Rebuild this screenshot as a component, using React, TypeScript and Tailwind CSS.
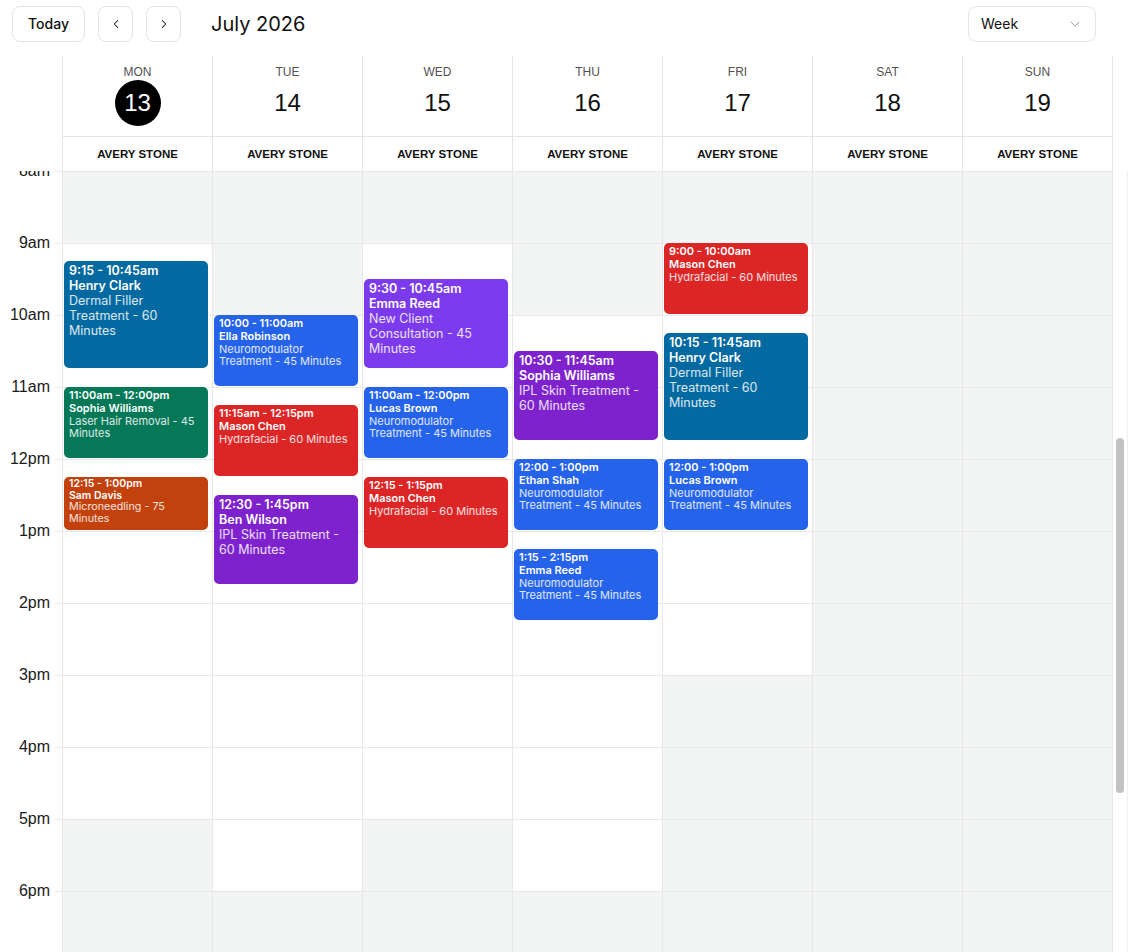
import { useLayoutEffect, useRef } from "react";
import { ChevronDown, ChevronLeft, ChevronRight } from "lucide-react";

type Size = "lg" | "md" | "sm";

type Appt = {
  start: number;
  end: number;
  time: string;
  client: string;
  service: string;
  color: string;
  size: Size;
};

type Day = {
  name: string;
  date: number;
  today?: boolean;
  open?: [number, number];
  appts: Appt[];
};

const HOUR_PX = 72;
const FIRST_VISIBLE_HOUR = 8;

const SKY = "bg-[#0369a1]";
const EMERALD = "bg-[#047857]";
const ORANGE = "bg-[#c2410c]";
const BLUE = "bg-[#2563eb]";
const RED = "bg-[#dc2626]";
const PURPLE = "bg-[#7e22ce]";
const VIOLET = "bg-[#7c3aed]";

const days: Day[] = [
  {
    name: "MON",
    date: 13,
    today: true,
    open: [9, 17],
    appts: [
      { start: 9.25, end: 10.75, time: "9:15 - 10:45am", client: "Henry Clark", service: "Dermal Filler Treatment - 60 Minutes", color: SKY, size: "lg" },
      { start: 11, end: 12, time: "11:00am - 12:00pm", client: "Sophia Williams", service: "Laser Hair Removal - 45 Minutes", color: EMERALD, size: "md" },
      { start: 12.25, end: 13, time: "12:15 - 1:00pm", client: "Sam Davis", service: "Microneedling - 75 Minutes", color: ORANGE, size: "sm" },
    ],
  },
  {
    name: "TUE",
    date: 14,
    open: [10, 18],
    appts: [
      { start: 10, end: 11, time: "10:00 - 11:00am", client: "Ella Robinson", service: "Neuromodulator Treatment - 45 Minutes", color: BLUE, size: "md" },
      { start: 11.25, end: 12.25, time: "11:15am - 12:15pm", client: "Mason Chen", service: "Hydrafacial - 60 Minutes", color: RED, size: "md" },
      { start: 12.5, end: 13.75, time: "12:30 - 1:45pm", client: "Ben Wilson", service: "IPL Skin Treatment - 60 Minutes", color: PURPLE, size: "lg" },
    ],
  },
  {
    name: "WED",
    date: 15,
    open: [9, 17],
    appts: [
      { start: 9.5, end: 10.75, time: "9:30 - 10:45am", client: "Emma Reed", service: "New Client Consultation - 45 Minutes", color: VIOLET, size: "lg" },
      { start: 11, end: 12, time: "11:00am - 12:00pm", client: "Lucas Brown", service: "Neuromodulator Treatment - 45 Minutes", color: BLUE, size: "md" },
      { start: 12.25, end: 13.25, time: "12:15 - 1:15pm", client: "Mason Chen", service: "Hydrafacial - 60 Minutes", color: RED, size: "md" },
    ],
  },
  {
    name: "THU",
    date: 16,
    open: [10, 18],
    appts: [
      { start: 10.5, end: 11.75, time: "10:30 - 11:45am", client: "Sophia Williams", service: "IPL Skin Treatment - 60 Minutes", color: PURPLE, size: "lg" },
      { start: 12, end: 13, time: "12:00 - 1:00pm", client: "Ethan Shah", service: "Neuromodulator Treatment - 45 Minutes", color: BLUE, size: "md" },
      { start: 13.25, end: 14.25, time: "1:15 - 2:15pm", client: "Emma Reed", service: "Neuromodulator Treatment - 45 Minutes", color: BLUE, size: "md" },
    ],
  },
  {
    name: "FRI",
    date: 17,
    open: [9, 15],
    appts: [
      { start: 9, end: 10, time: "9:00 - 10:00am", client: "Mason Chen", service: "Hydrafacial - 60 Minutes", color: RED, size: "md" },
      { start: 10.25, end: 11.75, time: "10:15 - 11:45am", client: "Henry Clark", service: "Dermal Filler Treatment - 60 Minutes", color: SKY, size: "lg" },
      { start: 12, end: 13, time: "12:00 - 1:00pm", client: "Lucas Brown", service: "Neuromodulator Treatment - 45 Minutes", color: BLUE, size: "md" },
    ],
  },
  { name: "SAT", date: 18, appts: [] },
  { name: "SUN", date: 19, appts: [] },
];

const hours = Array.from({ length: 24 }, (_, i) => i);

function hourLabel(h: number) {
  const suffix = h < 12 ? "am" : "pm";
  const n = h % 12 === 0 ? 12 : h % 12;
  return `${n}${suffix}`;
}

const sizeStyles: Record<Size, { pad: string; head: string; body: string }> = {
  lg: { pad: "pt-[2px]", head: "text-[12.5px] leading-[15px]", body: "text-[12.5px] leading-[15px]" },
  md: { pad: "pt-[2px]", head: "text-[11px] leading-[13px]", body: "text-[11px] leading-[12px]" },
  sm: { pad: "pt-px", head: "text-[10.5px] leading-[11.5px]", body: "text-[10.75px] leading-[11.5px]" },
};

function ApptCard({ appt }: { appt: Appt }) {
  const s = sizeStyles[appt.size];
  return (
    <div
      className={`absolute left-px right-[4px] overflow-hidden rounded-[5px] pl-[5px] pr-[6px] text-white ${appt.color} ${s.pad}`}
      style={{ top: appt.start * HOUR_PX, height: (appt.end - appt.start) * HOUR_PX - 1 }}
    >
      <div className={`font-semibold ${s.head}`}>{appt.time}</div>
      <div className={`font-semibold ${s.head}`}>{appt.client}</div>
      <div className={`text-white/85 ${s.body}`}>{appt.service}</div>
    </div>
  );
}

function ToolbarButton({ children, className = "" }: { children: React.ReactNode; className?: string }) {
  return (
    <button
      type="button"
      className={`flex h-9 items-center justify-center rounded-lg border border-[#e5e5e5] bg-white text-[#111] ${className}`}
    >
      {children}
    </button>
  );
}

export default function App() {
  const scrollRef = useRef<HTMLDivElement>(null);

  useLayoutEffect(() => {
    if (scrollRef.current) scrollRef.current.scrollTop = FIRST_VISIBLE_HOUR * HOUR_PX;
  }, []);

  return (
    <div className="flex h-screen w-full flex-col overflow-hidden bg-white">
      {/* toolbar */}
      <div className="flex h-14 shrink-0 items-start pl-3 pr-8 pt-1.5 font-['Inter','Noto_Sans',sans-serif]">
        <div className="flex h-9 w-full items-center">
          <ToolbarButton className="w-[73px] text-sm font-medium">Today</ToolbarButton>
          <ToolbarButton className="ml-[13px] w-[35px]">
            <ChevronLeft size={14} strokeWidth={1.75} />
          </ToolbarButton>
          <ToolbarButton className="ml-[13px] w-[35px]">
            <ChevronRight size={14} strokeWidth={1.75} />
          </ToolbarButton>
          <h1 className="ml-[30px] text-[20px] font-normal leading-9 text-[#111]">July 2026</h1>
          <button
            type="button"
            className="ml-auto flex h-9 w-[128px] items-center justify-between rounded-lg border border-[#e5e5e5] bg-white pl-[12px] pr-[12px] text-sm text-[#111]"
          >
            <span>Week</span>
            <ChevronDown size={16} strokeWidth={1.5} className="text-[#a3a3a3]" />
          </button>
        </div>
      </div>

      {/* day + resource header */}
      <div className="flex shrink-0 font-['Liberation_Sans',Arial,sans-serif]">
        <div className="w-[62px] shrink-0" />
        {days.map((d, i) => (
          <div
            key={d.name}
            className={`flex shrink-0 flex-col border-l border-[#e5e5e5] ${i === days.length - 1 ? "w-[151px] border-r" : "w-[150px]"}`}
          >
            <div className="flex h-20 flex-col items-center pt-2">
              <div className="text-xs leading-4 text-[#525252]">{d.name}</div>
              <div
                className={`flex size-[46px] items-center justify-center rounded-full text-2xl ${
                  d.today ? "bg-black text-white" : "text-[#111]"
                }`}
              >
                {d.date}
              </div>
            </div>
            <div className="flex h-[35px] items-center justify-center border-t border-[#e5e5e5] pt-px text-[11.5px] font-bold text-[#111]">
              AVERY STONE
            </div>
          </div>
        ))}
      </div>

      {/* scrolling time grid with its scroll track */}
      <div className="flex min-h-0 flex-1">
        <div
          ref={scrollRef}
          className="min-h-0 flex-1 overflow-y-auto [scrollbar-width:none] [&::-webkit-scrollbar]:hidden"
        >
          <div className="flex">
            <div className="w-[62px] shrink-0 font-['Liberation_Sans',Arial,sans-serif]">
              {hours.map((h) => (
                <div key={h} className="flex h-[72px] items-start justify-end">
                  <span className="-translate-y-1/2 pr-[5px] text-base leading-[18px] text-[#1a1a1a]">{hourLabel(h)}</span>
                  <div className="h-px w-[7px] bg-[#e8e8e8]" />
                </div>
              ))}
            </div>
            {days.map((d, i) => (
              <div
                key={d.name}
                className={`relative shrink-0 border-l border-[#e8e8e8] ${i === days.length - 1 ? "w-[151px] border-r" : "w-[150px]"}`}
              >
                {hours.map((h) => {
                  const open = d.open && h >= d.open[0] && h < d.open[1];
                  return (
                    <div
                      key={h}
                      className={`h-[72px] border-t border-[#e8e8e8] ${open ? "bg-white" : "bg-[#f3f4f4]"}`}
                    />
                  );
                })}
                <div className="font-['Inter','Noto_Sans',sans-serif]">
                  {d.appts.map((a) => (
                    <ApptCard key={a.time + a.client} appt={a} />
                  ))}
                </div>
              </div>
            ))}
          </div>
        </div>
        <div className="w-[15px] shrink-0 border-r border-[#f0f0f0] bg-white pl-[3px] pr-[3px]">
          <div className="mt-[267px] h-[355px] w-2 rounded-full bg-[#c2c2c2]" />
        </div>
      </div>
    </div>
  );
}
